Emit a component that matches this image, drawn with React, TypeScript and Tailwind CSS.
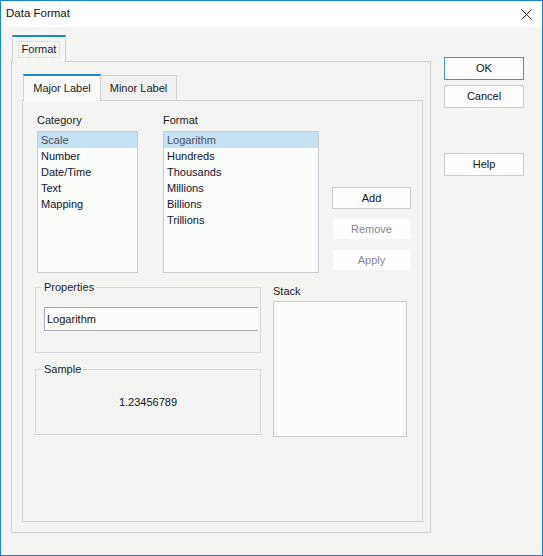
import React from "react";

const FONT = { fontFamily: '"Liberation Sans", Arial, sans-serif' };

const CATEGORIES = ["Scale", "Number", "Date/Time", "Text", "Mapping"];
const FORMATS = ["Logarithm", "Hundreds", "Thousands", "Millions", "Billions", "Trillions"];

function ListBox({ items, width }: { items: string[]; width: string }) {
  return (
    <div className={`${width} h-[142px] mt-[3px] border border-[#c9cccf] bg-[#fbfdfb]`}>
      {items.map((item, i) => (
        <div
          key={item}
          className={
            i === 0
              ? "h-[16px] leading-[16px] pl-[3px] bg-[#c4e2f3] text-[#4c4c5c]"
              : "h-[16px] leading-[16px] pl-[3px] text-[#111133]"
          }
        >
          {item}
        </div>
      ))}
    </div>
  );
}

function GroupBox({
  title,
  children,
  className,
}: {
  title: string;
  children?: React.ReactNode;
  className?: string;
}) {
  return (
    <div className={`relative w-[226px] h-[66px] border border-[#d6d6d6] ${className ?? ""}`}>
      <span className="absolute -top-[9px] left-[6px] px-[2px] leading-[16px] bg-[#f4f5f3] text-[#1a1a1a]">
        {title}
      </span>
      {children}
    </div>
  );
}

function DialogButton({
  label,
  primary,
  disabled,
  className,
}: {
  label: string;
  primary?: boolean;
  disabled?: boolean;
  className?: string;
}) {
  let tone = "border-[#cccccc] bg-[#fdfdfd] text-[#111122]";
  if (primary) tone = "border-[#3f92d8] bg-[#fdfdfd] text-[#111122]";
  if (disabled) tone = "border-[#f4f5f3] bg-[#fefefe] text-[#858595]";

  return (
    <button className={`flex items-center justify-center border ${tone} ${className ?? ""}`}>
      {label}
    </button>
  );
}

export default function App() {
  return (
    <div
      className="w-[543px] h-[556px] border border-[#1883d7] bg-[#f4f5f3] flex flex-col overflow-hidden text-[11px] text-[#1a1a1a]"
      style={FONT}
    >
      <div className="h-[26px] bg-white flex items-center justify-between pl-[5px] pr-[10px]">
        <span className="text-[11.5px] text-[#111111]">Data Format</span>
        <svg width="11" height="11" viewBox="0 0 11 11" aria-hidden="true">
          <path d="M0.5 0.5 L10.5 10.5 M10.5 0.5 L0.5 10.5" stroke="#222222" strokeWidth="1" />
        </svg>
      </div>

      <div className="flex-1 flex">
        <div className="pl-[10px] pt-[8px]">
          <div className="flex">
            <div className="relative z-10 ml-[1px] w-[54px] h-[27px] -mb-[1px] border-x border-[#d0d0d0] border-t-2 border-t-[#1a8ad6] bg-[#f6f6f4] flex items-center justify-center">
              <span className="px-[3px] leading-[15px] border border-dotted border-[#b9d3e6]">Format</span>
            </div>
          </div>

          <div className="w-[420px] h-[472px] border border-[#d0d0d0] pl-[10px] pt-[12px]">
            <div className="flex">
              <div className="relative z-10 ml-[1px] w-[78px] h-[27px] -mb-[1px] border-x border-[#d0d0d0] border-t-2 border-t-[#1a8ad6] bg-[#fafafa] flex items-center justify-center">
                Major Label
              </div>
              <div className="mt-[1px] w-[76px] h-[25px] border-t border-r border-[#d0d0d0] bg-[#f0f0f0] flex items-center justify-center">
                Minor Label
              </div>
            </div>

            <div className="w-[401px] h-[422px] border border-[#d0d0d0] pl-[14px] pt-[11px]">
              <div className="flex">
                <div className="w-[101px]">
                  <div className="h-[16px] leading-[16px]">Category</div>
                  <ListBox items={CATEGORIES} width="w-[101px]" />
                </div>
                <div className="ml-[25px] w-[156px]">
                  <div className="h-[16px] leading-[16px]">Format</div>
                  <ListBox items={FORMATS} width="w-[156px]" />
                </div>
                <div className="ml-[13px] mt-[75px] w-[79px] flex flex-col gap-[9px]">
                  <DialogButton label="Add" className="h-[22px]" />
                  <DialogButton label="Remove" disabled className="h-[22px]" />
                  <DialogButton label="Apply" disabled className="h-[22px]" />
                </div>
              </div>

              <div className="flex mt-[6px] -ml-[2px]">
                <div className="w-[226px]">
                  <GroupBox title="Properties" className="mt-[8px]">
                    <div className="mt-[19px] ml-[8px] w-[214px] h-[24px] border-y border-l border-[#a9abb2] bg-[#fcfdfb] pl-[2px] flex items-center text-[#111111]">
                      Logarithm
                    </div>
                  </GroupBox>
                  <GroupBox title="Sample" className="mt-[16px] flex items-center justify-center">
                    <span className="text-[#111111]">1.23456789</span>
                  </GroupBox>
                </div>
                <div className="ml-[12px]">
                  <div className="mt-[4px] h-[16px] leading-[16px]">Stack</div>
                  <div className="mt-[2px] w-[134px] h-[136px] border border-[#cacaca] bg-[#fbfdfb]" />
                </div>
              </div>
            </div>
          </div>
        </div>

        <div className="ml-[13px] pt-[30px] flex flex-col">
          <DialogButton label="OK" primary className="w-[80px] h-[23px]" />
          <DialogButton label="Cancel" className="w-[80px] h-[23px] mt-[5px]" />
          <DialogButton label="Help" className="w-[80px] h-[23px] mt-[45px]" />
        </div>
      </div>
    </div>
  );
}
